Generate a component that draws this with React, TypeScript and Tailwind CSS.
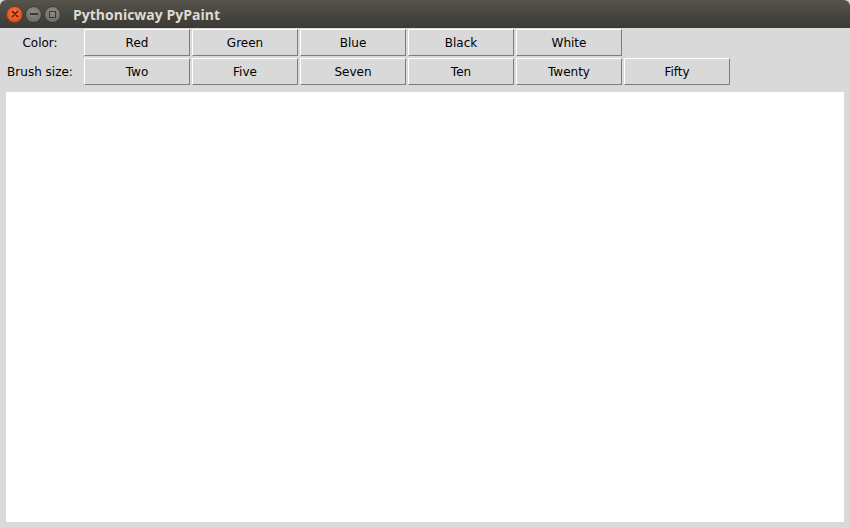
import React from "react";

const colors = ["Red", "Green", "Blue", "Black", "White"];
const sizes = ["Two", "Five", "Seven", "Ten", "Twenty", "Fifty"];

function TkButton({ label }: { label: string }) {
  return (
    <button className="w-[106px] h-[27px] bg-[#d9d9d9] border border-t-white border-l-white border-r-[#7c7c7c] border-b-[#7c7c7c] text-[12px] text-black leading-none flex items-center justify-center">
      {label}
    </button>
  );
}

export default function App() {
  return (
    <div
      className="w-[850px] h-[528px] flex flex-col bg-[#d9d9d9] overflow-hidden"
      style={{ fontFamily: '"DejaVu Sans", "Liberation Sans", sans-serif' }}
    >
      {/* title bar */}
      <div className="h-[28px] shrink-0 flex items-center rounded-t-[6px] bg-gradient-to-b from-[#56534c] to-[#3b3a35] pl-[6px]">
        <div className="flex items-center gap-[2px]">
          <div className="w-[17px] h-[17px] rounded-full bg-[radial-gradient(circle_at_50%_35%,#f7703f,#db4616)] border border-[#8a3616] flex items-center justify-center">
            <svg width="8" height="8" viewBox="0 0 8 8">
              <path d="M1.5 1.5l5 5M6.5 1.5l-5 5" stroke="#3a1a0c" strokeWidth="1.4" strokeLinecap="round" />
            </svg>
          </div>
          <div className="w-[17px] h-[17px] rounded-full bg-[radial-gradient(circle_at_50%_35%,#8c8b86,#66655f)] border border-[#3a3935] flex items-center justify-center">
            <div className="w-[8px] h-[2px] bg-[#3b3a36]" />
          </div>
          <div className="w-[17px] h-[17px] rounded-full bg-[radial-gradient(circle_at_50%_35%,#8c8b86,#66655f)] border border-[#3a3935] flex items-center justify-center">
            <div className="w-[7px] h-[7px] border-[1.5px] border-[#3b3a36]" />
          </div>
        </div>
        <span
          className="ml-[12px] text-[14px] font-bold text-[#dfdbd2]"
          style={{ fontFamily: '"Open Sans", "DejaVu Sans", sans-serif' }}
        >
          Pythonicway PyPaint
        </span>
      </div>

      {/* toolbar rows */}
      <div className="flex flex-col gap-[2px] pt-[1px]">
        <div className="flex gap-[2px]">
          <div className="w-[82px] pr-[2px] flex items-center justify-center text-[12px] text-black">
            Color:
          </div>
          {colors.map((c) => (
            <TkButton key={c} label={c} />
          ))}
        </div>
        <div className="flex gap-[2px]">
          <div className="w-[82px] pr-[2px] flex items-center justify-center text-[12px] text-black">
            Brush size:
          </div>
          {sizes.map((s) => (
            <TkButton key={s} label={s} />
          ))}
        </div>
      </div>

      {/* canvas */}
      <div className="mt-[7px] mx-[6px] h-[430px] bg-white" />
    </div>
  );
}
